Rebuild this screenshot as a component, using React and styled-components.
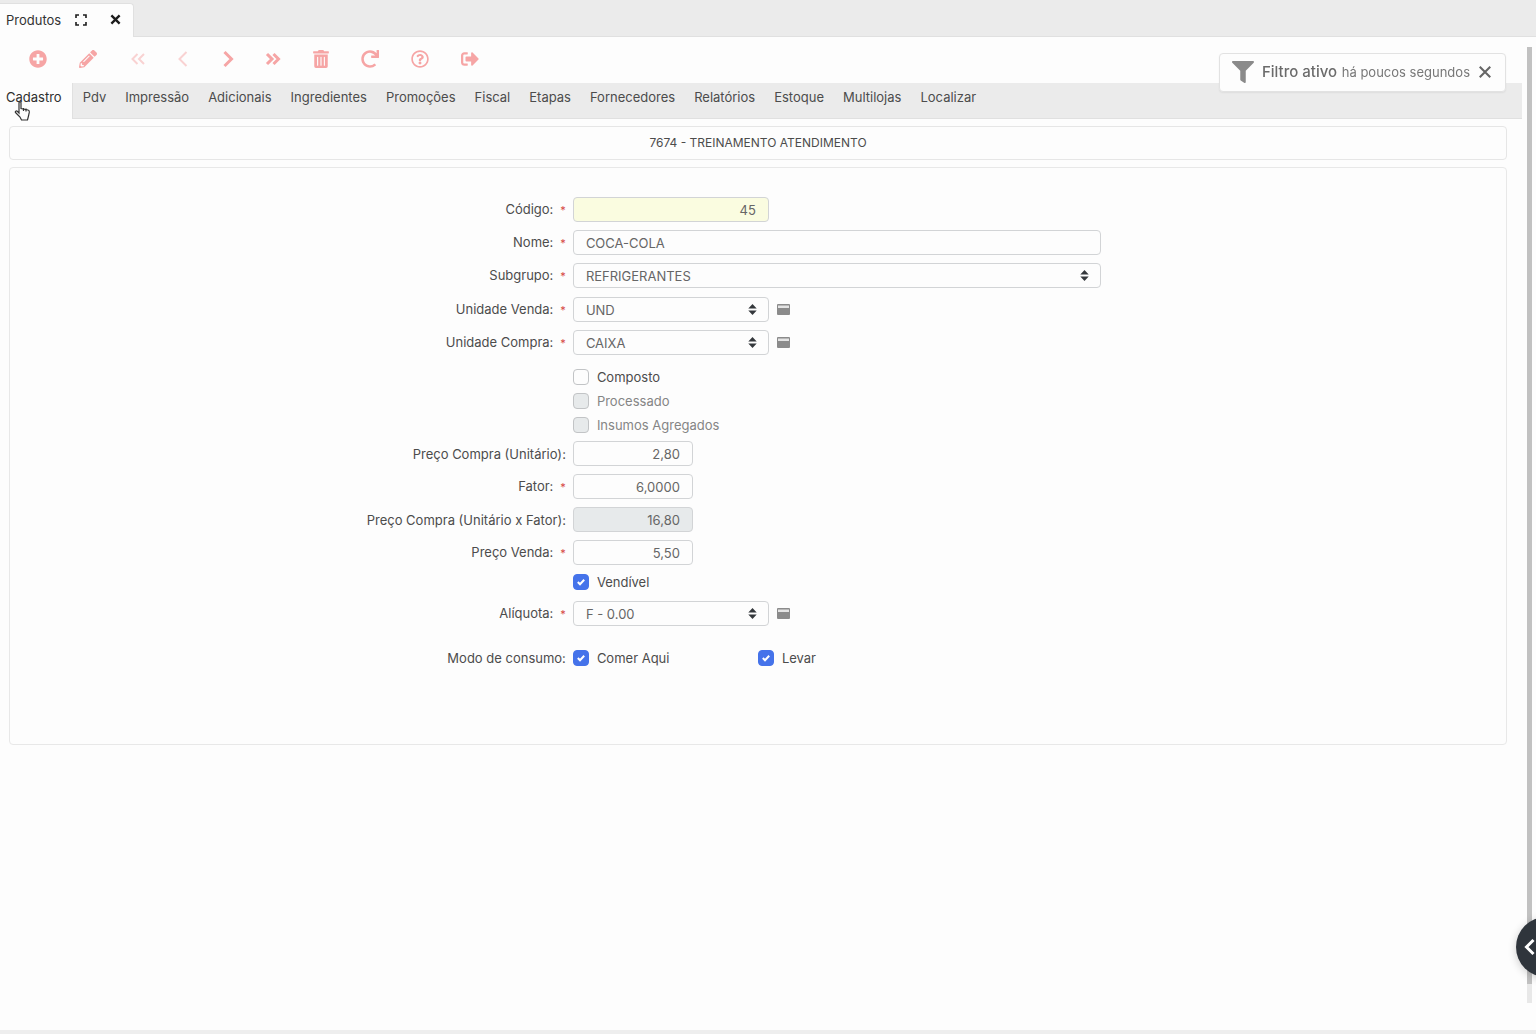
import React from "react";
import styled, { createGlobalStyle, css } from "styled-components";
import {
  FaPlusCircle,
  FaPencilAlt,
  FaTrashAlt,
  FaRedo,
  FaRegQuestionCircle,
  FaSignOutAlt,
  FaFilter,
} from "react-icons/fa";

const GlobalStyle = createGlobalStyle`
  * { box-sizing: border-box; }
  html, body { margin: 0; height: 100%; }
  body {
    background: #fdfdfd;
    color: #4c4c4c;
    font-family: Inter, "Open Sans", sans-serif;
    font-size: 13px;
    line-height: 16px;
    overflow: hidden;
  }
  button, input, select { font: inherit; color: inherit; margin: 0; }
  button { border: 0; padding: 0; background: none; cursor: pointer; }
`;

const Page = styled.div`
  display: flex;
  flex-direction: column;
  min-height: 100vh;
  border-bottom: 4px solid #eeeeee;
`;

const WindowBar = styled.header`
  display: flex;
  align-items: flex-end;
  height: 37px;
  background: #ebebeb;
  border-bottom: 1px solid #e0e0e0;
`;

const WindowTab = styled.div`
  display: flex;
  align-items: center;
  height: 34px;
  width: 134px;
  margin-bottom: -1px;
  padding: 0 11px 2px 6px;
  background: #fdfdfd;
  border: 1px solid #e0e0e0;
  border-width: 1px 1px 0 0;
  border-radius: 0 4px 0 0;
  color: #333333;
`;

const WindowTitle = styled.span`
  flex: 1;
`;

const WindowButton = styled.button`
  display: grid;
  place-items: center;
  width: 14px;
  height: 16px;
  margin-left: 20px;
  color: #1c1c1c;
  &:first-of-type { margin-left: 0; }
`;

const Toolbar = styled.div`
  display: flex;
  align-items: center;
  height: 46px;
  padding: 0 28px 3px;
`;

const ToolButton = styled.button`
  display: grid;
  place-items: center;
  width: ${(p) => p.$width || 50}px;
  height: 24px;
  color: #f6a5a5;
  font-size: 18px;
  &:disabled { color: #f9d2d2; cursor: default; }
`;

const TabStrip = styled.nav`
  display: flex;
  gap: 1px;
  height: 36px;
  margin-right: 14px;
  background: #ebebeb;
  border-bottom: 1px solid #e0e0e0;
`;

const Tab = styled.a`
  height: 36px;
  padding: 6px 9px 0;
  color: inherit;
  text-decoration: none;
  white-space: nowrap;
  ${(p) =>
    p.$active &&
    css`
      padding-left: 6px;
      padding-right: 10px;
      background: #fdfdfd;
      border-right: 1px solid #e0e0e0;
      color: #2e2e2e;
    `}
`;

const Content = styled.main`
  display: flex;
  flex-direction: column;
  gap: 7px;
  padding: 7px 29px 0 9px;
`;

const Heading = styled.h1`
  margin: 0;
  padding: 8px;
  border: 1px solid #e6e6e6;
  border-radius: 4px;
  font-size: 12px;
  font-weight: 400;
  line-height: 16px;
  text-align: center;
`;

const Panel = styled.form`
  display: flex;
  flex-direction: column;
  padding: 25px 0 74px;
  border: 1px solid #e8e8e8;
  border-radius: 4px;
`;

const Group = styled.div`
  padding-top: ${(p) => p.$space || 0}px;
`;

const Row = styled.div`
  display: grid;
  grid-template-columns: 3fr 5fr;
  column-gap: 3px;
  align-items: center;
  min-height: ${(p) => (p.$compact ? 24 : 33)}px;
`;

const Label = styled.label`
  padding-right: 4px;
  text-align: right;
`;

const Star = styled.span`
  padding-left: 7px;
  color: #d64545;
  font-size: 11px;
`;

const Cell = styled.div`
  display: flex;
  align-items: center;
  grid-column: 2;
`;

const widths = { small: "120px", medium: "196px", wide: "528px" };

const fieldBox = css`
  width: 100%;
  height: 25px;
  padding: 0 12px;
  border: 1px solid #d2d4d6;
  border-radius: 4px;
  background: #fdfdfd;
  color: #666666;
  outline: 0;
`;

const TextInput = styled.input`
  ${fieldBox}
  max-width: ${(p) => widths[p.$size]};
  text-align: ${(p) => (p.$numeric ? "right" : "left")};
  ${(p) => p.$highlight && "background: #fafce0;"}
  &:disabled { background: #e7eaeb; }
`;

const SelectBox = styled.div`
  display: grid;
  align-items: center;
  width: 100%;
  max-width: ${(p) => widths[p.$size]};
  & > * { grid-area: 1 / 1; }
  & > svg {
    justify-self: end;
    margin-right: 12px;
    pointer-events: none;
  }
`;

const NativeSelect = styled.select`
  ${fieldBox}
  appearance: none;
`;

const LookupButton = styled.button`
  display: grid;
  margin-left: 8px;
`;

const CheckLabel = styled.label`
  display: flex;
  align-items: center;
  gap: 8px;
  width: 185px;
  color: ${(p) => (p.$muted ? "#858585" : "inherit")};
`;

const CheckBox = styled.span`
  display: grid;
  place-items: center;
  & > * { grid-area: 1 / 1; }
  & > svg { pointer-events: none; }
`;

const CheckInput = styled.input`
  appearance: none;
  width: 16px;
  height: 16px;
  border: 1px solid #c2c4c6;
  border-radius: 4px;
  background: #fdfdfd;
  &:checked { background: #4573ea; border-color: #4573ea; }
  &:disabled { background: #e7eaeb; }
`;

const Toast = styled.aside`
  position: fixed;
  top: 53px;
  right: 30px;
  display: flex;
  align-items: center;
  width: 287px;
  height: 39px;
  padding: 0 13px 1px 12px;
  border: 1px solid #e2e2e2;
  border-radius: 4px;
  background: #fdfdfd;
  box-shadow: 0 1px 2px rgba(0, 0, 0, 0.06);
  color: #8a8a8a;
`;

const ToastTitle = styled.strong`
  flex: 1;
  padding-left: 8px;
  color: #6b6b6b;
  font-size: 15px;
  font-weight: 500;
  white-space: nowrap;
`;

const ToastTime = styled.span`
  margin-right: 8px;
  color: #777777;
  white-space: nowrap;
`;

const ToastClose = styled.button`
  display: grid;
  color: #666666;
`;

const ScrollTrack = styled.div`
  position: fixed;
  top: 47px;
  right: 4px;
  bottom: 31px;
  width: 5px;
  background: #e8e8e8;
`;

const ScrollThumb = styled.div`
  height: 98%;
  background: #c1c1c1;
`;

const DrawerButton = styled.button`
  position: fixed;
  right: -40px;
  bottom: 57px;
  display: flex;
  align-items: center;
  width: 60px;
  height: 60px;
  padding-left: 8px;
  border-radius: 50%;
  background: #2f353c;
  box-shadow: 0 2px 8px rgba(0, 0, 0, 0.2);
  color: #ffffff;
`;

const Pointer = styled.svg`
  position: fixed;
  top: 101px;
  left: 14px;
  pointer-events: none;
`;

const Chevron = ({ left, double, stroke = 3 }) => (
  <svg
    width={double ? 16 : 12}
    height="18"
    viewBox={double ? "0 0 16 18" : "0 0 12 18"}
    fill="none"
    stroke="currentColor"
    strokeWidth={stroke}
    transform={left ? "scale(-1 1)" : undefined}
  >
    {double ? (
      <path d="M2 4l5 5-5 5M8.500 4l5 5-5 5" />
    ) : (
      <path d="M2.500 2l7 7-7 7" />
    )}
  </svg>
);

const Cross = ({ size, stroke }) => (
  <svg width={size} height={size} viewBox="0 0 12 12" stroke="currentColor" strokeWidth={stroke}>
    <path d="M1.500 1.500l9 9M10.500 1.500l-9 9" />
  </svg>
);

const Expand = () => (
  <svg width="12" height="12" viewBox="0 0 12 12" fill="none" stroke="currentColor" strokeWidth="1.600">
    <path d="M1 4V1h3M8 1h3v3M11 8v3H8M4 11H1V8" />
  </svg>
);

const Carets = () => (
  <svg width="9" height="11" viewBox="0 0 9 11" fill="#34383c">
    <path d="M4.500 0L8.700 4.500H.3zM4.500 11L.3 6.500h8.400z" />
  </svg>
);

const Tick = () => (
  <svg width="8" height="8" viewBox="0 0 8 8" fill="none" stroke="#ffffff" strokeWidth="2">
    <path d="M.8 4l2.200 2.200L7.200 1.800" />
  </svg>
);

const Lookup = () => (
  <svg width="13" height="11" viewBox="0 0 13 11">
    <rect width="13" height="11" rx="1" fill="#8b8b8b" />
    <rect x="1" y="1.500" width="11" height="2.500" fill="#e4e4e4" />
  </svg>
);

const tabs = [
  "Cadastro", "Pdv", "Impressão", "Adicionais", "Ingredientes", "Promoções", "Fiscal",
  "Etapas", "Fornecedores", "Relatórios", "Estoque", "Multilojas", "Localizar",
];

const FieldRow = ({ id, label, required, children }) => (
  <Row>
    <Label htmlFor={id}>
      {label}:{required && <Star>*</Star>}
    </Label>
    <Cell>{children}</Cell>
  </Row>
);

const InputRow = ({ id, label, required, value, ...rest }) => (
  <FieldRow id={id} label={label} required={required}>
    <TextInput id={id} defaultValue={value} {...rest} />
  </FieldRow>
);

const SelectRow = ({ id, label, value, size = "medium", lookup }) => (
  <FieldRow id={id} label={label} required>
    <SelectBox $size={size}>
      <NativeSelect id={id}>
        <option>{value}</option>
      </NativeSelect>
      <Carets />
    </SelectBox>
    {lookup && (
      <LookupButton type="button" aria-label={`Abrir ${label}`}>
        <Lookup />
      </LookupButton>
    )}
  </FieldRow>
);

const Check = ({ label, checked, disabled }) => (
  <CheckLabel $muted={disabled}>
    <CheckBox>
      <CheckInput type="checkbox" defaultChecked={checked} disabled={disabled} />
      {checked && <Tick />}
    </CheckBox>
    {label}
  </CheckLabel>
);

export default function App() {
  return (
    <Page>
      <GlobalStyle />
      <WindowBar>
        <WindowTab>
          <WindowTitle>Produtos</WindowTitle>
          <WindowButton aria-label="Expandir"><Expand /></WindowButton>
          <WindowButton aria-label="Fechar"><Cross size={11} stroke={2.6} /></WindowButton>
        </WindowTab>
      </WindowBar>
      <Toolbar>
        <ToolButton $width={20} aria-label="Novo"><FaPlusCircle /></ToolButton>
        <ToolButton $width={80} aria-label="Editar"><FaPencilAlt /></ToolButton>
        <ToolButton $width={20} disabled aria-label="Primeiro"><Chevron left double stroke={2} /></ToolButton>
        <ToolButton $width={70} disabled aria-label="Anterior"><Chevron left stroke={2} /></ToolButton>
        <ToolButton $width={20} aria-label="Próximo"><Chevron /></ToolButton>
        <ToolButton $width={70} aria-label="Último"><Chevron double /></ToolButton>
        <ToolButton $width={26} aria-label="Excluir"><FaTrashAlt /></ToolButton>
        <ToolButton $width={72} aria-label="Atualizar"><FaRedo /></ToolButton>
        <ToolButton $width={28} aria-label="Ajuda"><FaRegQuestionCircle /></ToolButton>
        <ToolButton $width={72} aria-label="Sair"><FaSignOutAlt /></ToolButton>
      </Toolbar>
      <TabStrip>
        {tabs.map((name, i) => (
          <Tab key={name} href="#" $active={i === 0}>{name}</Tab>
        ))}
      </TabStrip>
      <Content>
        <Heading>7674 - TREINAMENTO ATENDIMENTO</Heading>
        <Panel>
          <Group>
            <InputRow id="codigo" label="Código" required value="45" $size="medium" $numeric $highlight />
            <InputRow id="nome" label="Nome" required value="COCA-COLA" $size="wide" />
            <SelectRow id="subgrupo" label="Subgrupo" value="REFRIGERANTES" size="wide" />
          </Group>
          <Group $space={1}>
            <SelectRow id="venda" label="Unidade Venda" value="UND" lookup />
            <SelectRow id="compra" label="Unidade Compra" value="CAIXA" lookup />
          </Group>
          <Group $space={6}>
            <Row $compact><Cell><Check label="Composto" /></Cell></Row>
            <Row $compact><Cell><Check label="Processado" disabled /></Cell></Row>
            <Row $compact><Cell><Check label="Insumos Agregados" disabled /></Cell></Row>
          </Group>
          <Group>
            <InputRow id="unitario" label="Preço Compra (Unitário)" value="2,80" $size="small" $numeric />
            <InputRow id="fator" label="Fator" required value="6,0000" $size="small" $numeric />
            <InputRow id="total" label="Preço Compra (Unitário x Fator)" value="16,80" $size="small" $numeric disabled />
            <InputRow id="preco" label="Preço Venda" required value="5,50" $size="small" $numeric />
          </Group>
          <Group $space={1}>
            <Row $compact><Cell><Check label="Vendível" checked /></Cell></Row>
          </Group>
          <Group $space={3}>
            <SelectRow id="aliquota" label="Alíquota" value="F - 0.00" lookup />
          </Group>
          <Group $space={16}>
            <Row $compact role="group" aria-labelledby="modo">
              <Label as="span" id="modo">Modo de consumo:</Label>
              <Cell>
                <Check label="Comer Aqui" checked />
                <Check label="Levar" checked />
              </Cell>
            </Row>
          </Group>
        </Panel>
      </Content>
      <Toast>
        <FaFilter size={22} />
        <ToastTitle>Filtro ativo</ToastTitle>
        <ToastTime>há poucos segundos</ToastTime>
        <ToastClose aria-label="Fechar aviso"><Cross size={14} stroke={1.8} /></ToastClose>
      </Toast>
      <ScrollTrack><ScrollThumb /></ScrollTrack>
      <DrawerButton aria-label="Abrir painel"><Chevron left stroke={3} /></DrawerButton>
      <Pointer width="18" height="20" viewBox="0 0 18 20" fill="#fdfdfd" stroke="#333333" strokeWidth="1.200">
        <path d="M5 1.500c0-1 2-1 2 0v6l7 1.500c1.200.4 1.500 1 1.300 2.200L14.500 15l-1 4H7.500L6 16 1.500 11.500c-.8-1 .8-2 1.800-1.200L5 12z" />
        <path d="M9.500 7v3M12 7.500v3" />
      </Pointer>
    </Page>
  );
}
